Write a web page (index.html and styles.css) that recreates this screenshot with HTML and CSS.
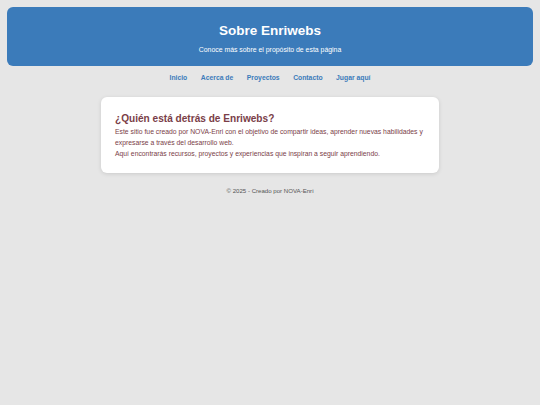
FILE: index.html
```html
<!DOCTYPE html>
<html lang="es">
<head>
<meta charset="utf-8">
<title>Sobre Enriwebs</title>
<link rel="stylesheet" href="styles.css">
</head>
<body>
<header class="hero">
  <h1 class="hero-title">Sobre Enriwebs</h1>
  <p class="hero-sub">Conoce más sobre el propósito de esta página</p>
</header>
<nav class="nav">
  <a href="#" class="nav-link">Inicio</a>
  <a href="#" class="nav-link">Acerca de</a>
  <a href="#" class="nav-link">Proyectos</a>
  <a href="#" class="nav-link">Contacto</a>
  <a href="#" class="nav-link">Jugar aquí</a>
</nav>
<main class="card">
  <h2 class="card-title">¿Quién está detrás de Enriwebs?</h2>
  <p class="card-text">Este sitio fue creado por NOVA-Enri con el objetivo de compartir ideas, aprender nuevas habilidades y expresarse a través del desarrollo web.<br>Aquí encontrarás recursos, proyectos y experiencias que inspiran a seguir aprendiendo.</p>
</main>
<footer class="footer">© 2025 - Creado por NOVA-Enri</footer>
</body>
</html>
```
FILE: styles.css
```css
html, body {
  margin: 0;
  padding: 0;
}
body {
  background: #e6e6e6;
  font-family: "Liberation Sans", Arial, sans-serif;
  padding: 7px;
}
.hero {
  background: #3b7bba;
  border-radius: 6px;
  height: 59px;
  box-sizing: border-box;
  padding-top: 15px;
  text-align: center;
  color: #ffffff;
}
.hero-title {
  margin: 0;
  font-size: 13.5px;
  line-height: 18px;
  font-weight: bold;
}
.hero-sub {
  margin: 5px 0 0;
  font-size: 6.9px;
  line-height: 9px;
}
.nav {
  display: flex;
  justify-content: center;
  gap: 13.5px;
  margin-top: 7px;
  height: 10px;
  line-height: 10px;
}
.nav-link {
  color: #3b7bba;
  font-weight: bold;
  font-size: 6.8px;
  text-decoration: none;
}
.card {
  display: block;
  width: 338px;
  box-sizing: border-box;
  margin: 14px auto 0;
  height: 76px;
  background: #ffffff;
  border-radius: 6px;
  box-shadow: 0 1px 4px rgba(0, 0, 0, 0.12);
  padding: 15px 14px 0;
  color: #7a3e48;
}
.card-title {
  margin: 0;
  font-size: 10.1px;
  line-height: 14px;
  font-weight: bold;
}
.card-text {
  margin: 1px 0 0;
  font-size: 6.8px;
  line-height: 10.9px;
}
.footer {
  text-align: center;
  color: #555555;
  font-size: 6.1px;
  margin-top: 14px;
  line-height: 8px;
}
```
